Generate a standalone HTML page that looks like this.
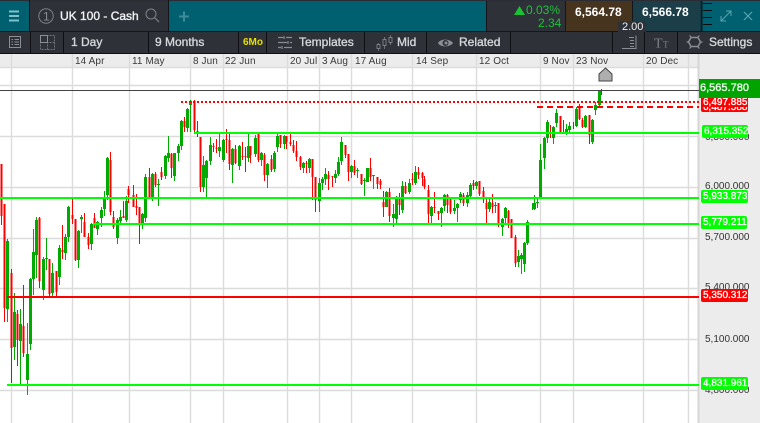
<!DOCTYPE html>
<html><head><meta charset="utf-8"><style>
html,body{margin:0;padding:0;background:#fff}
#p{position:relative;width:760px;height:423px;overflow:hidden;font-family:"Liberation Sans",sans-serif;background:#fff}
.a{position:absolute}
.t{position:absolute;white-space:nowrap;font-size:12px;line-height:14px;color:#d4d7da;-webkit-text-stroke:.35px currentColor}
.d{position:absolute;top:56px;font-size:10px;line-height:12px;color:#3a3a3a;white-space:nowrap;letter-spacing:.1px}
.y{position:absolute;left:705px;font-size:10px;line-height:12px;color:#333;white-space:nowrap}
.l{position:absolute;height:13px;border-radius:2px;color:#fff;font-size:10px;line-height:14px;padding-left:2px;box-sizing:border-box;white-space:nowrap;-webkit-text-stroke:.3px #fff}
.g{background:#0f0}.r{background:#f00}
.s{position:absolute;top:32px;width:1px;height:21px;background:#0e0f12}
</style></head><body><div id="p">
<div class="a" style="left:0;top:0;width:760px;height:32px;background:#00606f;border-top:1px solid #2a2d33;box-sizing:border-box"></div>
<div class="a" style="left:30px;top:1px;width:138px;height:30px;background:#2e3138"></div>
<div class="a" style="left:29px;top:0;width:1px;height:32px;background:#14161a"></div>
<div class="a" style="left:168px;top:0;width:1px;height:32px;background:#14161a"></div>
<div class="a" style="left:486px;top:1px;width:79px;height:31px;background:#2e3138;border-left:1px solid #14161a;box-sizing:border-box"></div>
<div class="a" style="left:565px;top:1px;width:67px;height:31px;background:#46341f;border-left:1px solid #14161a;box-sizing:border-box"></div>
<div class="a" style="left:632px;top:1px;width:68px;height:31px;background:#1c3e49;border-left:1px solid #14161a;box-sizing:border-box"></div>
<div class="a" style="left:0;top:31px;width:760px;height:1px;background:#14161a"></div>
<div class="a" style="left:0;top:32px;width:760px;height:21px;background:#2e3138"></div>
<div class="a" style="left:0;top:53px;width:760px;height:1px;background:#0e0f12"></div>
<div class="a" style="left:0;top:54px;width:760px;height:13px;background:#ececec"></div>
<div class="s" style="left:30px"></div><div class="s" style="left:63px"></div><div class="s" style="left:148px"></div><div class="s" style="left:238px"></div><div class="s" style="left:266px"></div><div class="s" style="left:364px"></div><div class="s" style="left:426px"></div><div class="s" style="left:510px"></div><div class="s" style="left:612px"></div><div class="s" style="left:644px"></div><div class="s" style="left:677px"></div>

<svg class="a" style="left:0;top:0" width="760" height="423" viewBox="0 0 760 423" fill="none">
<!-- grid -->
<rect x="699" y="67" width="61" height="356" fill="#ececec"/>
<rect x="697.5" y="54" width="2" height="369" fill="#d6d6d6"/>
<path d="M11.5 54V423M72.5 54V423M129.5 54V423M190.5 54V423M223.5 54V423M287.5 54V423M319.5 54V423M351.5 54V423M412.5 54V423M476.5 54V423M540.5 54V423M573.5 54V423M643.5 54V423M688.5 54V423" stroke="#dcdcdc" stroke-width="1.4"/>
<path d="M0 67.5H698M0 85.5H698M0 136.5H698M0 187.5H698M0 238.5H698M0 288.5H698M0 339.5H698M0 390.5H698" stroke="#dcdcdc" stroke-width="1.4"/>
<!-- top icons -->
<path d="M9 11.5H19M9 16H19M9 20.5H19" stroke="#7cc2ca" stroke-width="2"/>
<circle cx="46" cy="16" r="7.2" stroke="#7d8187" stroke-width="1"/>
<text x="43" y="20.500" font-family="Liberation Sans" font-size="12" fill="#8a8e94">1</text>
<circle cx="151" cy="14" r="5" stroke="#7f8389" stroke-width="1"/>
<path d="M155 18L159 22" stroke="#7f8389" stroke-width="1.2"/>
<path d="M184 11.5V21.5M179 16.5H189" stroke="#3b8b98" stroke-width="2"/>
<path d="M703 3.500H712M703 10.500H712M703 17.500H712M703 24.500H712" stroke="#0b0c0e" stroke-width="1"/>
<path d="M701.500 1V31" stroke="#14161a" stroke-width="2"/>
<path d="M721 21L731 11M726 11H731V16M721 16V21H726" stroke="#5aa4b0" stroke-width="1"/>
<path d="M744 12L752 20M752 12L744 20" stroke="#5aa4b0" stroke-width="1.2"/>
<path d="M514 15L519.500 6L525 15Z" fill="#1cc134"/>
<!-- toolbar icons -->
<rect x="9.500" y="36.500" width="11" height="11" stroke="#8a8e94"/>
<path d="M11.500 39.500H13M14.500 39.500H19M11.500 42H13M14.500 42H19M11.500 44.500H13M14.500 44.500H19" stroke="#8a8e94"/>
<path d="M40.500 35.500H54.500V49.500H40.500ZM47.500 35.500V49.500M40.500 42.500H54.500" stroke="#6f7379" stroke-dasharray="2 1"/>
<path d="M40.500 35.500H47.500V42.500H40.500Z" stroke="#8a8e94"/>
<path d="M278 37.500H283M286 37.500H292M278 42.500H287M290 42.500H292M278 47.500H281M284 47.500H292M284 36V39M288 41V44M282 46V49" stroke="#8a8e94" stroke-width="1.2"/>
<path d="M378.500 43V51M384.500 37V49M390.500 35V45" stroke="#6c7076"/>
<rect x="377" y="44.500" width="3" height="4" fill="#2e3138" stroke="#8a8e94" stroke-width=".8"/><rect x="383" y="39.500" width="3" height="6" fill="#2e3138" stroke="#8a8e94" stroke-width=".8"/><rect x="389" y="37.500" width="3" height="5" fill="#2e3138" stroke="#8a8e94" stroke-width=".8"/>
<path d="M438 43C440 38.500 450 38.500 453 43C450 47.500 440 47.500 438 43Z" fill="#8c9096"/>
<circle cx="445.500" cy="43" r="3" fill="#2e3138"/><circle cx="446" cy="43" r="1.500" fill="#8c9096"/>
<path d="M622 48.500H636V35.500M629 37.500H634M630 40.500H634M630 43.500H634M630 46.500H634" stroke="#8a8e94"/>
<text x="654" y="47.500" font-family="Liberation Serif" font-size="14" fill="#7d8187">T</text><text x="663" y="47.500" font-family="Liberation Serif" font-size="9" fill="#7d8187">T</text>
<path d="M691 37.500H698L700.500 42L698 46.500H691L688.500 42Z" stroke="#8a8e94" stroke-width="1.500"/>
<path d="M689.500 35.500L691.500 37.500M699.500 35.500L697.500 37.500M686.500 42H688.500M700.500 42H702.500M689.500 48.500L691.500 46.500M699.500 48.500L697.500 46.500" stroke="#8a8e94" stroke-width="1.200"/>
<!-- candle wicks -->
<g transform="translate(.5 0)">
<path stroke="#f00" d="M1 164V225M4 204V322M11 269V383M17 310V366M23 285V357M39 217V288M49 259V297M56 271V297M62 225V259M72 199V224M75 219V261M84 213V237M88 233V249M94 213V228M110 152V215M113 211V229M123 201V218M128 186V203M133 185V207M136 194V215M139 207V244M149 168V197M155 172V187M161 167V180M171 153V178M184 117V132M194 100V133M197 121V137M200 137V192M213 143V152M216 139V153M226 129V153M229 133V170M235 145V164M242 142V160M245 147V172M250 146V163M258 133V162M264 153V181M271 155V172M280 135V148M286 136V149M290 133V146M293 140V153M296 141V161M300 156V170M306 161V173M312 159V200M315 177V212M328 171V190M332 176V187M345 145V158M348 154V181M354 160V175M361 174V185M370 158V181M377 177V189M380 179V189M383 191V217M389 188V222M399 193V215M405 182V194M412 173V185M418 167V179M422 172V186M424 176V189M428 185V223M434 192V213M438 211V220M447 194V213M450 197V214M463 193V206M473 180V190M479 181V196M483 187V203M486 197V223M492 194V213M498 203V227M508 210V228M511 219V238M515 235V267M550 125V138M560 116V132M563 120V133M573 122V129M579 104V120M582 118V128M589 115V144M601 89V95"/>
<path stroke="#00aa00" d="M7 239V322M14 293V360M20 309V384M27 323V395M30 278V350M33 229V295M36 217V278M43 257V300M46 238V270M52 263V297M59 245V285M65 234V260M68 206V242M78 230V268M81 215V233M91 223V250M97 221V235M101 207V227M104 191V216M107 157V200M117 218V244M120 210V223M126 196V222M142 213V229M145 174V222M152 173V201M158 179V206M165 155V179M168 136V162M174 153V181M178 144V161M181 120V150M187 108V132M190 100V132M203 156V192M206 160V197M210 137V165M219 133V157M223 139V162M232 148V183M239 145V170M248 134V162M255 135V157M261 152V166M267 163V188M274 151V172M277 133V152M284 135V149M303 162V173M309 158V173M319 178V212M322 177V190M325 168V185M335 170V183M338 157V176M341 137V165M351 165V178M357 168V178M364 178V196M367 168V182M373 175V189M386 191V207M393 204V227M396 196V223M402 181V213M409 179V194M415 166V185M431 206V223M441 207V227M444 194V211M454 200V214M457 203V222M460 192V203M467 192V207M470 183V197M476 181V189M489 199V212M495 202V213M502 218V236M505 207V223M518 250V267M521 253V274M524 242V272M527 220V245M532 203V210M534 195V210M537 197V208M540 144V198M544 137V169M547 120V143M553 126V144M556 109V127M566 124V135M569 122V133M576 107V127M585 115V128M592 119V144M595 102V115M599 90V106"/>
<path stroke="#f00" stroke-width="2" d="M1 164V216M4 204V308M11 273V348M17 314V340M23 326V353M39 218V281M49 259V294M56 271V292M62 250V252M72 215V219M75 219V260M84 222V237M88 237V245M94 218V228M110 160V212M113 217V227M123 216V218M128 189V195M133 195V207M136 206V208M139 207V223M149 177V197M155 174V185M161 172V177M171 154V168M184 121V127M194 101V130M197 131V134M200 137V187M213 146V147M216 148V149M226 139V140M229 140V164M235 149V163M242 156V157M245 156V157M250 146V155M258 134V160M264 155V175M271 159V170M280 135V144M286 136V142M290 142V144M293 145V151M296 151V157M300 157V167M306 163V164M312 159V177M315 177V200M328 175V179M332 176V177M345 145V155M348 154V172M354 166V173M361 174V184M370 168V177M377 177V184M380 181V185M383 202V207M389 192V216M399 198V205M405 186V193M412 179V180M418 172V175M422 173V178M424 179V187M428 190V214M434 207V208M438 211V214M447 195V205M450 197V212M463 195V203M473 183V186M479 181V194M483 191V198M486 203V209M492 203V207M498 203V225M508 211V223M511 219V238M515 237V263M560 116V132M579 107V119M582 120V127M589 115V135"/>
<path stroke="#00aa00" stroke-width="3" d="M7 241V309M14 312V347M20 324V341M27 354V380M30 279V344M33 252V279M36 220V255M43 259V290M46 258V259M52 273V293M59 248V277M65 237V253M68 207V237M78 231V260M81 217V219M91 224V244M97 222V229M101 210V218M104 198V209M107 158V195M117 220V238M120 217V221M126 201V220M142 214V223M145 177V218M152 174V197M158 184V185M165 156V176M168 153V158M174 153V176M178 146V153M181 121V146M187 109V128M190 101V105M203 165V187M206 161V178M210 145V161M219 147V151M223 140V160M232 149V165M239 146V166M248 146V158M255 138V154M261 153V160M267 164V175M274 153V169M277 136V147M284 136V144M303 163V168M309 159V168M319 183V201M322 179V183M325 174V179M335 174V178M338 162V174M341 142V161M351 166V172M357 170V171M364 180V181M367 168V182M373 175V176M386 192V207M393 214V218M396 197V219M402 186V210M409 183V192M415 172V183M431 207V216M441 208V213M444 195V206M454 208V211M457 204V208M460 194V200M467 195V203M470 185V196M476 182V186M489 202V209M495 205V206M502 219V227M505 208V218M518 256V262M521 255V259M524 243V264M527 222V243M534 203V209M537 202V203M540 160V197M544 138V158M547 122V138M553 127V138M556 113V123M566 129V132M569 126V130M576 109V126M585 116V127M592 120V142M595 105V110M599 91V105"/>
</g>
<!-- levels -->
<path d="M0 90.500H699" stroke="#444" stroke-width="1"/>
<path d="M181 102H699" stroke="#f00" stroke-width="2" stroke-dasharray="2 2"/>
<path d="M537 107H699" stroke="#f00" stroke-width="2" stroke-dasharray="6 4"/>
<path d="M194 133H699M0 198H699M94 224H699M7 385H699" stroke="#0f0" stroke-width="2"/>
<path d="M7 297H699" stroke="#f00" stroke-width="2"/>
<path d="M605.500 68L612 74V81H599V74Z" fill="#aeaeae" stroke="#444" stroke-width="1"/>
</svg>

<div class="t" style="left:60px;top:9px;color:#f2f3f4">UK 100 - Cash</div>
<div class="t" style="left:526px;top:3px;color:#1fc13a;-webkit-text-stroke:0">0.03%</div>
<div class="t" style="left:538px;top:16px;color:#1fc13a;-webkit-text-stroke:0">2.34</div>
<div class="t" style="left:575px;top:5px;color:#fff;font-weight:bold;-webkit-text-stroke:0">6,564.78</div>
<div class="t" style="left:642px;top:5px;color:#fff;font-weight:bold;-webkit-text-stroke:0">6,566.78</div>
<div class="a" style="left:618px;top:21px;width:28px;height:11px;background:#2e3138;border-radius:2px 2px 0 0"></div>
<div class="t" style="left:622px;top:20px;font-size:11px;color:#f0f0f0;-webkit-text-stroke:0">2.00</div>
<div class="t" style="left:71px;top:35px">1 Day</div>
<div class="t" style="left:155px;top:35px">9 Months</div>
<div class="t" style="left:243px;top:36px;font-size:10px;font-weight:bold;color:#e6e000;-webkit-text-stroke:0">6Mo</div>
<div class="t" style="left:299px;top:35px">Templates</div>
<div class="t" style="left:397px;top:35px">Mid</div>
<div class="t" style="left:459px;top:35px">Related</div>
<div class="t" style="left:709px;top:35px">Settings</div>

<div class="d" style="left:75px">14 Apr</div><div class="d" style="left:132px">11 May</div><div class="d" style="left:193px">8 Jun</div><div class="d" style="left:225px">22 Jun</div><div class="d" style="left:290px">20 Jul</div><div class="d" style="left:322px">3 Aug</div><div class="d" style="left:355px">17 Aug</div><div class="d" style="left:416px">14 Sep</div><div class="d" style="left:479px">12 Oct</div><div class="d" style="left:543px">9 Nov</div><div class="d" style="left:576px">23 Nov</div><div class="d" style="left:646px">20 Dec</div>

<div class="y" style="top:132px">6,300.000</div>
<div class="y" style="top:181px">6,000.000</div>
<div class="y" style="top:232px">5,700.000</div>
<div class="y" style="top:282px">5,400.000</div>
<div class="y" style="top:334px">5,100.000</div>
<div class="y" style="top:385px">4,800.000</div>

<div class="l r" style="left:701px;top:102px;width:47px;height:10px;line-height:12px">6,487.588</div>
<div class="l r" style="left:701px;top:96px;width:47px;height:11px;line-height:13px">6,497.885</div>
<div class="a" style="left:699px;top:79px;width:61px;height:19px;background:#00a300;color:#f0fff0;font-size:11px;line-height:19px;padding-left:1px;box-sizing:border-box;-webkit-text-stroke:.35px #f0fff0">6,565.780</div>
<div class="l g" style="left:702px;top:125px;width:46px">6,315.352</div>
<div class="l g" style="left:701px;top:190px;width:47px">5,933.873</div>
<div class="l g" style="left:701px;top:216px;width:46px">5,779.211</div>
<div class="l r" style="left:701px;top:289px;width:47px">5,350.312</div>
<div class="l g" style="left:701px;top:377px;width:47px">4,831.961</div>
</div></body></html>
